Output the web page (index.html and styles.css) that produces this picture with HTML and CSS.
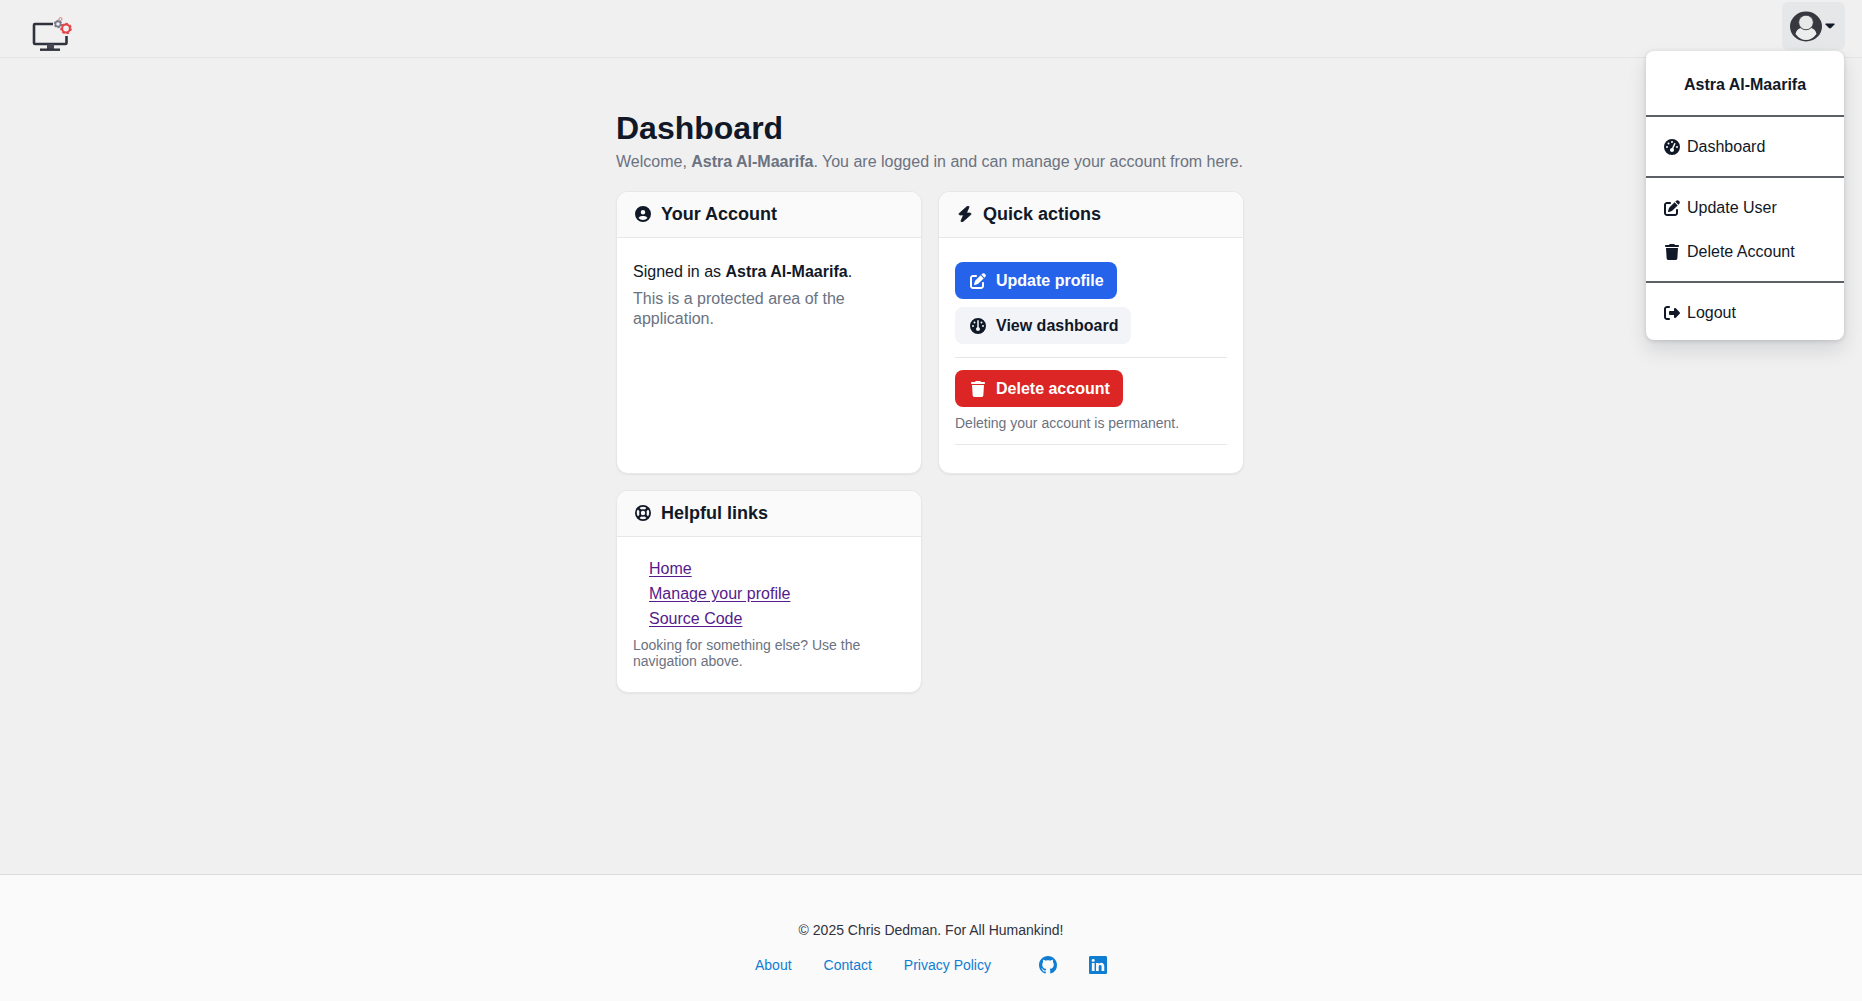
FILE: index.html
```html
<!DOCTYPE html>
<html lang="en">
<head>
<meta charset="utf-8">
<meta name="viewport" content="width=device-width, initial-scale=1">
<title>Dashboard</title>
<link rel="stylesheet" href="styles.css">
</head>
<body>
<svg class="sprite" aria-hidden="true">
  <symbol id="i-user" viewBox="0 0 512 512"><path d="M399 384.2C376.9 345.8 335.4 320 288 320l-64 0c-47.4 0-88.9 25.8-111 64.2c35.2 39.2 86.2 63.8 143 63.8s107.8-24.7 143-63.8zM0 256a256 256 0 1 1 512 0A256 256 0 1 1 0 256zm256 16a72 72 0 1 0 0-144 72 72 0 1 0 0 144z"/></symbol>
  <symbol id="i-gauge" viewBox="0 0 512 512"><path d="M0 256a256 256 0 1 1 512 0A256 256 0 1 1 0 256zm320 96c0-26.9-16.5-49.9-40-59.3V88c0-13.3-10.7-24-24-24s-24 10.7-24 24V292.7c-23.5 9.5-40 32.5-40 59.3c0 35.3 28.7 64 64 64s64-28.7 64-64zM144 176a32 32 0 1 0 0-64 32 32 0 1 0 0 64zm-16 80a32 32 0 1 0 -64 0 32 32 0 1 0 64 0zm288 32a32 32 0 1 0 0-64 32 32 0 1 0 0 64zM400 144a32 32 0 1 0 -64 0 32 32 0 1 0 64 0z"/></symbol>
  <symbol id="i-gauge-high" viewBox="0 0 512 512"><path d="M0 256a256 256 0 1 1 512 0A256 256 0 1 1 0 256zM288 96a32 32 0 1 0 -64 0 32 32 0 1 0 64 0zM256 416c35.3 0 64-28.7 64-64c0-17.4-6.9-33.1-18.1-44.6L366 161.7c5.3-12.1-.2-26.3-12.3-31.6s-26.3 .2-31.6 12.3L257.9 288c-.6 0-1.3 0-1.9 0c-35.3 0-64 28.7-64 64s28.7 64 64 64zM176 144a32 32 0 1 0 -64 0 32 32 0 1 0 64 0zM96 288a32 32 0 1 0 0-64 32 32 0 1 0 0 64zm352-32a32 32 0 1 0 -64 0 32 32 0 1 0 64 0z"/></symbol>
  <symbol id="i-edit" viewBox="0 0 512 512"><path d="M471.6 21.7c-21.9-21.9-57.3-21.9-79.2 0L362.3 51.7l97.9 97.9 30.1-30.1c21.9-21.9 21.9-57.3 0-79.2L471.6 21.7zm-299.2 220c-6.1 6.1-10.8 13.6-13.5 21.9l-29.6 88.8c-2.9 8.6-.6 18.1 5.8 24.6s15.9 8.7 24.6 5.8l88.8-29.6c8.2-2.7 15.7-7.4 21.9-13.5L437.7 172.3 339.7 74.3 172.4 241.7zM96 64C43 64 0 107 0 160V416c0 53 43 96 96 96H352c53 0 96-43 96-96V320c0-17.7-14.3-32-32-32s-32 14.3-32 32v96c0 17.7-14.3 32-32 32H96c-17.7 0-32-14.3-32-32V160c0-17.7 14.3-32 32-32h96c17.7 0 32-14.3 32-32s-14.3-32-32-32H96z"/></symbol>
  <symbol id="i-trash" viewBox="-32 0 512 512"><path d="M135.2 17.7L128 32H32C14.3 32 0 46.3 0 64S14.3 96 32 96H416c17.7 0 32-14.3 32-32s-14.3-32-32-32H320l-7.2-14.3C307.4 6.8 296.3 0 284.2 0H163.8c-12.1 0-23.2 6.8-28.6 17.7zM416 128H32L53.2 467c1.6 25.3 22.6 45 47.9 45H346.9c25.3 0 46.3-19.7 47.9-45L416 128z"/></symbol>
  <symbol id="i-logout" viewBox="0 0 512 512"><path d="M377.9 105.9L500.7 228.7c7.2 7.2 11.3 17.1 11.3 27.3s-4.1 20.1-11.3 27.3L377.9 406.1c-6.4 6.4-15 9.9-24 9.9c-18.7 0-33.9-15.2-33.9-33.9l0-62.1-128 0c-17.7 0-32-14.3-32-32l0-64c0-17.7 14.3-32 32-32l128 0 0-62.1c0-18.7 15.2-33.9 33.9-33.9c9 0 17.6 3.6 24 9.9zM160 96L96 96c-17.7 0-32 14.3-32 32l0 256c0 17.7 14.3 32 32 32l64 0c17.7 0 32 14.3 32 32s-14.3 32-32 32l-64 0c-53 0-96-43-96-96L0 128C0 75 43 32 96 32l64 0c17.7 0 32 14.3 32 32s-14.3 32-32 32z"/></symbol>
  <symbol id="i-bolt" viewBox="-32 0 512 512"><path d="M349.4 44.6c5.900-13.700 1.500-29.700-10.600-38.500s-28.600-8-39.900 1.800l-256 224c-10 8.800-13.600 22.900-8.900 35.300S50.700 288 64 288H175.500L98.600 467.400c-5.900 13.700-1.500 29.700 10.600 38.500s28.600 8 39.900-1.800l256-224c10-8.800 13.600-22.900 8.900-35.300s-16.600-20.700-30-20.700H272.500L349.400 44.600z" stroke="currentColor" stroke-width="24"/></symbol>
  <symbol id="i-ring" viewBox="0 0 16 16"><g fill="none" stroke="currentColor"><circle cx="8" cy="8" r="7.1" stroke-width="1.8"/><circle cx="8" cy="8" r="3" stroke-width="1.6"/><path stroke-width="2.4" d="M3 3l2.8 2.8M13 3l-2.8 2.8M3 13l2.8-2.8M13 13l-2.8-2.8"/></g></symbol>
  <symbol id="i-github" viewBox="0 0 16 16"><path d="M8 0C3.58 0 0 3.58 0 8c0 3.54 2.29 6.53 5.47 7.59.4.07.55-.17.55-.38 0-.19-.01-.82-.01-1.49-2.01.37-2.53-.49-2.69-.94-.09-.23-.48-.94-.82-1.13-.28-.15-.68-.52-.01-.53.63-.01 1.08.58 1.23.82.72 1.21 1.87.87 2.33.66.07-.52.28-.87.51-1.07-1.78-.2-3.64-.89-3.64-3.95 0-.87.31-1.59.82-2.15-.08-.2-.36-1.02.08-2.12 0 0 .67-.21 2.2.82.64-.18 1.32-.27 2-.27s1.36.09 2 .27c1.53-1.04 2.2-.82 2.2-.82.44 1.1.16 1.92.08 2.12.51.56.82 1.27.82 2.15 0 3.07-1.87 3.75-3.65 3.95.29.25.54.73.54 1.48 0 1.07-.01 1.93-.01 2.2 0 .21.15.46.55.38A8.01 8.01 0 0 0 16 8c0-4.42-3.58-8-8-8z"/></symbol>
  <symbol id="i-linkedin" viewBox="0 0 16 16"><path d="M0 1.146C0 .513.526 0 1.175 0h13.65C15.474 0 16 .513 16 1.146v13.708c0 .633-.526 1.146-1.175 1.146H1.175C.526 16 0 15.487 0 14.854V1.146zm4.943 12.248V6.169H2.542v7.225h2.401zm-1.2-8.212c.837 0 1.358-.554 1.358-1.248-.015-.709-.52-1.248-1.342-1.248-.822 0-1.359.54-1.359 1.248 0 .694.521 1.248 1.327 1.248h.016zm4.908 8.212V9.359c0-.216.016-.432.08-.586.173-.431.568-.878 1.232-.878.869 0 1.216.662 1.216 1.634v3.865h2.401V9.25c0-2.22-1.184-3.252-2.764-3.252-1.274 0-1.845.7-2.165 1.193v.025h-.016l.016-.025V6.169h-2.4c.03.678 0 7.225 0 7.225h2.4z"/></symbol>
</svg>

<header class="topbar">
  <a class="logo" href="#" aria-label="Home">
    <svg width="40" height="36" viewBox="0 0 40 36" fill="none" aria-hidden="true">
      <path d="M21 8H3Q2 8 2 9V27Q2 28 3 28H33.500Q34.500 28 34.500 27V20" stroke="#30323d" stroke-width="2.600"/>
      <path d="M15 28h7v5h-7z" fill="#454854"/>
      <path d="M8 33.700h20" stroke="#30323d" stroke-width="2.400"/>
      <circle cx="26" cy="8" r="2.600" stroke="#777c8c" stroke-width="1.600"/>
      <circle cx="26" cy="8" r="3.600" stroke="#777c8c" stroke-width="1.200" stroke-dasharray="2.100 1.670"/>
      <circle cx="28.500" cy="3" r="1.500" stroke="#d97f83" stroke-width="1"/>
      <circle cx="34" cy="12.500" r="3.900" stroke="#e34146" stroke-width="2"/>
      <circle cx="34" cy="12.500" r="5.100" stroke="#e34146" stroke-width="1.400" stroke-dasharray="2.580 2"/>
    </svg>
  </a>
  <div class="account">
    <button class="account-toggle" type="button" aria-label="Account menu" aria-expanded="true">
      <svg width="32" height="32" viewBox="0 0 32 32" aria-hidden="true">
        <ellipse cx="16" cy="16.500" rx="16" ry="15" fill="#363840"/>
        <path d="M5.500 24Q6.500 19 11 18q5 4 10 0 4.500 1 5.500 6-4.500 6-10.500 6T5.500 24z" fill="#eceded"/>
        <circle cx="16" cy="12.500" r="7.300" fill="#e7e8ea" stroke="#363840" stroke-width=".8"/>
      </svg>
      <svg width="10" height="6" viewBox="0 0 10 6" aria-hidden="true"><path d="M1 .500h8q1 0 .500 1L6 5q-1 .800-2 0L.500 1.500Q0 .500 1 .500z" fill="#111827"/></svg>
    </button>
    <nav class="menu" aria-label="Account">
      <p class="menu-name">Astra Al-Maarifa</p>
      <div class="menu-group">
        <a href="#"><svg class="icon"><use href="#i-gauge-high"/></svg>Dashboard</a>
      </div>
      <div class="menu-group">
        <a href="#"><svg class="icon"><use href="#i-edit"/></svg>Update User</a>
        <a href="#"><svg class="icon"><use href="#i-trash"/></svg>Delete Account</a>
      </div>
      <div class="menu-group">
        <a href="#"><svg class="icon"><use href="#i-logout"/></svg>Logout</a>
      </div>
    </nav>
  </div>
</header>

<main class="page">
  <h1>Dashboard</h1>
  <p class="lead">Welcome, <strong>Astra Al-Maarifa</strong>. You are logged in and can manage your account from here.</p>
  <div class="cards">
    <section class="card">
      <h2><svg class="icon"><use href="#i-user"/></svg>Your Account</h2>
      <div class="card-body">
        <p>Signed in as <strong>Astra Al-Maarifa</strong>.</p>
        <p class="muted">This is a protected area of the application.</p>
      </div>
    </section>
    <section class="card">
      <h2><svg class="icon"><use href="#i-bolt"/></svg>Quick actions</h2>
      <div class="card-body">
        <div class="actions">
          <button class="btn btn-primary" type="button"><svg class="icon"><use href="#i-edit"/></svg>Update profile</button>
          <button class="btn" type="button"><svg class="icon"><use href="#i-gauge"/></svg>View dashboard</button>
        </div>
        <div class="danger">
          <button class="btn btn-danger" type="button"><svg class="icon"><use href="#i-trash"/></svg>Delete account</button>
          <p class="small">Deleting your account is permanent.</p>
        </div>
      </div>
    </section>
    <section class="card">
      <h2><svg class="icon"><use href="#i-ring"/></svg>Helpful links</h2>
      <div class="card-body card-body-links">
        <ul class="links">
          <li><a href="#">Home</a></li>
          <li><a href="#">Manage your profile</a></li>
          <li><a href="#">Source Code</a></li>
        </ul>
        <p class="small">Looking for something else? Use the navigation above.</p>
      </div>
    </section>
  </div>
</main>

<footer class="footer">
  <p>© 2025 Chris Dedman. For All Humankind!</p>
  <div class="footer-nav">
    <a href="#">About</a>
    <a href="#">Contact</a>
    <a href="#">Privacy Policy</a>
    <span class="social">
      <a href="#" aria-label="GitHub"><svg class="icon"><use href="#i-github"/></svg></a>
      <a href="#" aria-label="LinkedIn"><svg class="icon"><use href="#i-linkedin"/></svg></a>
    </span>
  </div>
</footer>
</body>
</html>
```
FILE: styles.css
```css
* {
  box-sizing: border-box;
}

body {
  margin: 0;
  min-height: 100vh;
  display: flex;
  flex-direction: column;
  background: #f0f0f0;
  color: #111827;
  font: 16px/20px "Liberation Sans", Arial, sans-serif;
}

h1, h2, p, ul {
  margin: 0;
}

.sprite {
  display: none;
}

.icon {
  width: 16px;
  height: 16px;
  flex: none;
  fill: currentColor;
}

.topbar {
  display: flex;
  justify-content: space-between;
  align-items: flex-start;
  height: 58px;
  padding: 2px 17px 0 32px;
  border-bottom: 1px solid #e3e4e6;
}

.logo svg {
  display: block;
  margin-top: 14px;
}

.account {
  position: relative;
}

.account-toggle {
  display: flex;
  align-items: center;
  gap: 3px;
  width: 63px;
  height: 48px;
  padding: 0 8px;
  border: 0;
  border-radius: 6px;
  background: #e5e7e9;
}

.menu {
  position: absolute;
  top: 49px;
  right: 1px;
  width: 198px;
  padding-bottom: 5px;
  border-radius: 8px;
  background: #fff;
  box-shadow: 0 10px 20px rgba(17, 24, 39, .12), 0 1px 4px rgba(17, 24, 39, .16);
}

.menu-name {
  padding: 24px 8px 20px;
  font-weight: bold;
  text-align: center;
}

.menu-group {
  padding: 8px 0 7px;
  border-top: 2px solid #5d6067;
}

.menu-group:last-child {
  padding-bottom: 0;
}

.menu a {
  display: flex;
  align-items: center;
  gap: 7px;
  height: 44px;
  padding: 0 18px;
  color: inherit;
  text-decoration: none;
}

.page {
  flex: 1;
  width: 100%;
  max-width: 630px;
  margin: 0 auto;
  padding: 50px 2px 32px 0;
}

h1 {
  font-size: 32px;
  line-height: 40px;
}

.lead {
  margin: 4px 0 19px;
  color: #6b7280;
  white-space: nowrap;
}

.cards {
  display: grid;
  grid-template-columns: 1fr 1fr;
  gap: 16px;
}

.card {
  border: 1px solid #e5e7eb;
  border-radius: 12px;
  background: #fff;
  box-shadow: 0 1px 2px rgba(0, 0, 0, .06);
  overflow: hidden;
}

.card h2 {
  display: flex;
  align-items: center;
  gap: 10px;
  height: 46px;
  padding: 0 18px 2px;
  border-bottom: 1px solid #e5e7eb;
  background: #fafafa;
  font-size: 18px;
}

.card-body {
  padding: 24px 16px 23px;
}

.card-body-links {
  padding-top: 19px;
}

.muted {
  margin-top: 7px;
  color: #6b7280;
}

.small {
  color: #6b7280;
  font-size: 14px;
  line-height: 16px;
}

.actions {
  display: flex;
  flex-direction: column;
  align-items: flex-start;
  gap: 8px;
}

.danger {
  margin: 13px 0 5px;
  padding: 12px 0 13px;
  border: solid #e5e7eb;
  border-width: 1px 0;
}

.danger .small {
  margin-top: 8px;
}

.btn {
  display: inline-flex;
  align-items: center;
  gap: 10px;
  height: 37px;
  padding: 0 13px 0 15px;
  border: 0;
  border-radius: 8px;
  background: #f3f4f8;
  color: #111827;
  font: bold 16px/20px "Liberation Sans", Arial, sans-serif;
}

.btn-primary {
  background: #2563eb;
  color: #fff;
}

.btn-danger {
  background: #dc2626;
  color: #fff;
}

.links {
  padding-left: 16px;
  margin-bottom: 6px;
  list-style: none;
  line-height: 25px;
}

.links a {
  color: #551a8b;
  text-underline-offset: 2px;
}

.footer {
  padding: 45px 16px 26px;
  border-top: 1px solid #dcdcde;
  background: #fafafa;
  color: #30323d;
  font-size: 14px;
  text-align: center;
}

.footer-nav {
  display: flex;
  justify-content: center;
  align-items: center;
  gap: 32px;
  margin-top: 15px;
}

.footer a {
  color: #0f7dd2;
  text-decoration: none;
}

.social {
  display: flex;
  gap: 32px;
  margin-left: 16px;
}

.social .icon {
  display: block;
  width: 18px;
  height: 18px;
}
```
